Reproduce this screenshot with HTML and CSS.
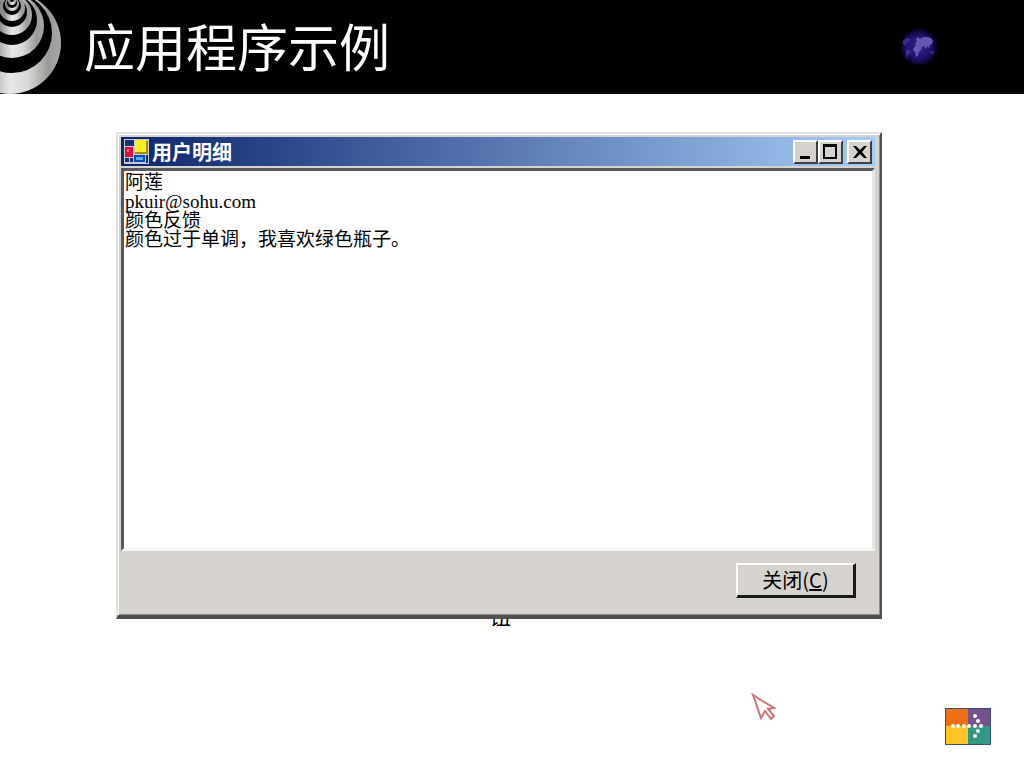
FILE: index.html
```html
<!DOCTYPE html>
<html lang="zh-CN">
<head>
  <meta charset="UTF-8">
  <meta name="viewport" content="width=device-width, initial-scale=1.0">
  <title>应用程序示例</title>
  <link rel="stylesheet" href="styles.css">
</head>
<body>
  <header class="banner">
    <svg class="rings" viewBox="0 0 62 94" aria-hidden="true">
      <defs>
        <linearGradient id="silver" x1="0" y1="0" x2="1" y2="0">
          <stop offset="0.2" stop-color="#8b8b89"/>
          <stop offset="0.5" stop-color="#e8e8e6"/>
          <stop offset="0.68" stop-color="#d8d8d6"/>
          <stop offset="0.88" stop-color="#9a9a97"/>
          <stop offset="1" stop-color="#aaaaa8"/>
        </linearGradient>
      </defs>
      <circle cx="10" cy="43" r="51" fill="url(#silver)"/>
      <circle cx="12" cy="33" r="40"/>
      <circle cx="12" cy="26" r="32" fill="url(#silver)"/>
      <circle cx="12" cy="20" r="25"/>
      <circle cx="12" cy="15" r="20" fill="url(#silver)"/>
      <circle cx="12" cy="12" r="15"/>
      <circle cx="12" cy="8" r="13" fill="url(#silver)"/>
      <circle cx="12" cy="6" r="9"/>
      <circle cx="12" cy="4" r="7" fill="url(#silver)"/>
      <circle cx="12" cy="3" r="5"/>
      <circle cx="12" cy="1" r="4" fill="url(#silver)"/>
      <circle cx="12" cy="0" r="2"/>
    </svg>
    <h1>应用程序示例</h1>
    <svg class="globe" viewBox="0 0 40 40" aria-hidden="true">
      <defs>
        <radialGradient id="glow">
          <stop offset="0" stop-color="#30248c"/>
          <stop offset="0.6" stop-color="#20126c"/>
          <stop offset="0.85" stop-color="#10083c"/>
          <stop offset="1" stop-color="#000"/>
        </radialGradient>
      </defs>
      <circle cx="20" cy="20" r="19" fill="url(#glow)"/>
      <path fill="#6457b0" d="M17 12l2-2 2 2 3-2 4 0 4 1 2 3-1 3-2 1-1 3-2-2-1 3-2-3-2 1-3-2-3 1-1-3 2-1zM16 19l4-1 3 2-1 3-2 2-1 4-2 1-1-5-2-2z"/>
      <path fill="#382c90" d="M4 14l3-3 5 1-1 2-3 2-1 3-3-2zM7 22l4 1 1 3-3 2-1 4-1-5zM31 24l3 0 1 3-3 0z"/>
    </svg>
  </header>

  <main class="stage">
    <section class="window" aria-labelledby="windowTitle">
      <div class="titlebar">
        <svg class="app-icon" viewBox="0 0 25 25" aria-hidden="true">
          <path fill="#c8c8d0" d="M0 0h25v25H0z"/>
          <path fill="#16306c" d="M1 1h9v6H1zM1 19h4v4H1zM6 19h3v4H6zM22 16h2v8h-2z"/>
          <path fill="#d80c3c" d="M1 8h8v10H1z"/>
          <path fill="#ff6c80" d="M3 10h2v3H3z"/>
          <path fill="#a49000" d="M11 2h13v13H11z"/>
          <path fill="#ffee20" d="M11 1h11v12H11z"/>
          <path fill="#0c48bc" d="M10 16h11v7H10z"/>
          <path fill="#48b4f4" d="M12 18h7v3h-7z"/>
        </svg>
        <h2 id="windowTitle">用户明细</h2>
        <div class="window-buttons">
          <button type="button" aria-label="最小化">
            <svg viewBox="0 0 21 20"><path d="M5 14h10v3H5z"/></svg>
          </button>
          <button type="button" aria-label="最大化">
            <svg viewBox="0 0 21 20"><path fill-rule="evenodd" d="M3 2h14v15H3zM5 5v10h10V5z"/></svg>
          </button>
          <button type="button" class="close" aria-label="关闭窗口">
            <svg viewBox="0 0 21 20"><path d="M4 4h3l4 4 4-4h3l-5 6 5 6h-3l-4-4-4 4H4l5-6z"/></svg>
          </button>
        </div>
      </div>
      <textarea class="details" readonly spellcheck="false" aria-label="用户明细">阿莲
pkuir@sohu.com
颜色反馈
颜色过于单调，我喜欢绿色瓶子。</textarea>
      <div class="actions">
        <button type="button" class="close-button" accesskey="c">关闭(<u>C</u>)</button>
      </div>
    </section>
    <p class="caption">钮</p>
  </main>

  <footer class="footer">
    <a href="#" aria-label="下一页">
      <svg class="next" viewBox="0 0 46 37">
        <path fill="#ee7014" d="M0 0h23v18H0z"/>
        <path fill="#74508c" d="M23 0h23v18H23z"/>
        <path fill="#fcc424" d="M0 18h23v19H0z"/>
        <path fill="#309884" d="M23 18h23v19H23z"/>
        <path fill="none" stroke="#34506c" d="M.5.5h45v36H.5z"/>
        <g fill="#fff">
          <circle cx="8" cy="18" r="2"/>
          <circle cx="13" cy="18" r="2"/>
          <circle cx="19" cy="18" r="2"/>
          <circle cx="24" cy="18" r="2"/>
          <circle cx="30" cy="18" r="2"/>
          <circle cx="36" cy="18" r="2"/>
          <circle cx="30" cy="8" r="2"/>
          <circle cx="33" cy="13" r="2"/>
          <circle cx="33" cy="23" r="2"/>
          <circle cx="30" cy="28" r="2"/>
        </g>
      </svg>
    </a>
  </footer>

  <svg class="pointer" viewBox="0 0 25 28" aria-hidden="true">
    <path d="M2 2l8 23 4-7 6 8 3-3-6-7 6-1z"/>
  </svg>
</body>
</html>
```
FILE: styles.css
```css
body {
  margin: 0;
  min-height: 100vh;
  display: flex;
  flex-direction: column;
  background: #fff;
  color: #000;
  font-family: "Liberation Serif", "Noto Sans CJK SC", serif;
}
.banner {
  display: flex;
  align-items: center;
  height: 94px;
  background: #000;
  color: #fff;
}
.rings {
  width: 62px;
  height: 94px;
}
h1 {
  margin: 0 0 4px 22px;
  font-family: "Noto Sans CJK SC", sans-serif;
  font-size: 51px;
  font-weight: 400;
  line-height: 64px;
}
.globe {
  width: 40px;
  height: 40px;
  margin-left: auto;
  margin-right: 85px;
}
.stage {
  flex: 1;
  padding: 38px 142px 0 116px;
}
.window {
  position: relative;
  z-index: 1;
  box-sizing: border-box;
  padding: 3px 5px 0 3px;
  background: #d6d3ce;
  border: 2px solid;
  border-color: #e4e2dc #505050 #505050 #e4e2dc;
  border-bottom-width: 4px;
  box-shadow: inset 1px 1px #fff, inset -1px -1px #8c8c88;
}
.titlebar {
  display: flex;
  align-items: center;
  height: 29px;
  padding: 0 3px;
  background: linear-gradient(to right, #0c246c, #a5cbf7);
}
.app-icon {
  width: 25px;
  height: 25px;
}
h2 {
  margin: 0 auto 0 3px;
  color: #fff;
  font-family: "Noto Sans CJK SC", sans-serif;
  font-size: 20px;
  line-height: 28px;
}
.window-buttons {
  display: flex;
}
button {
  padding: 0;
  background: #d6d3ce;
  color: #000;
  border: 2px solid;
  border-color: #fff #404040 #404040 #fff;
}
.window-buttons button {
  width: 25px;
  height: 24px;
}
.window-buttons .close {
  margin-left: 4px;
}
.window-buttons svg {
  display: block;
  width: 21px;
  height: 20px;
}
.details {
  display: block;
  box-sizing: border-box;
  width: 100%;
  height: 383px;
  margin-top: 2px;
  padding: 2px 0 0 1px;
  border: 3px solid;
  border-color: #585858 #e8e6e2 #f4f4f0 #585858;
  border-radius: 0;
  outline: none;
  resize: none;
  overflow: hidden;
  background: #fff;
  color: #000;
  font-family: "Liberation Serif", "Noto Sans CJK SC", serif;
  font-size: 19px;
  line-height: 19px;
}
.actions {
  display: flex;
  justify-content: flex-end;
  padding: 12px 19px 17px;
}
.close-button {
  width: 120px;
  height: 35px;
  border-width: 2px 3px 3px 2px;
  border-color: #fff #181818 #181818 #fff;
  font-family: "Noto Sans CJK SC", sans-serif;
  font-size: 20px;
  line-height: 24px;
}
.caption {
  margin: -17px 0 0;
  padding-left: 373px;
  font-family: "Noto Sans CJK SC", sans-serif;
  font-size: 22px;
  line-height: 24px;
}
.footer {
  display: flex;
  justify-content: flex-end;
  padding: 0 33px 23px;
}
.next {
  display: block;
  width: 46px;
  height: 37px;
}
.pointer {
  position: absolute;
  left: 751px;
  top: 693px;
  width: 25px;
  height: 28px;
  fill: #fff;
  stroke: #cc7474;
  stroke-width: 2;
}
```
